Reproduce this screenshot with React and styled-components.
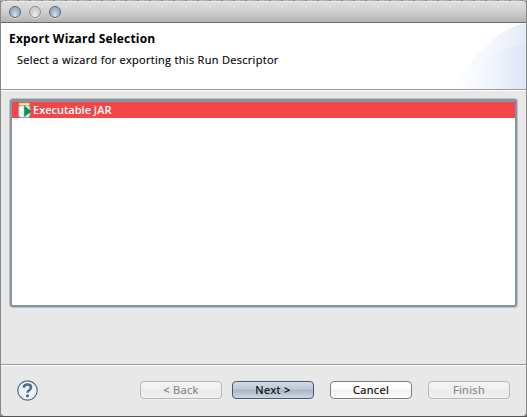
import React from 'react';
import styled, { createGlobalStyle } from 'styled-components';

const GlobalStyle = createGlobalStyle`
  * { box-sizing: border-box; }
  html, body { margin: 0; padding: 0; overflow: hidden; }
`;

const Desktop = styled.div`
  width: 527px;
  height: 417px;
  padding: 1px;
  background:
    linear-gradient(#555, #555) 0 100% / 100% 1px no-repeat,
    repeating-linear-gradient(90deg, #aaa 0 5px, #8b8886 5px 7px, #b5b5b5 7px 12px) 0 0 / 100% 1px no-repeat,
    linear-gradient(#8a8886, #8a8886);
  font-family: "Open Sans", "Noto Sans", sans-serif;
  color: #000;
`;

const Window = styled.main`
  display: flex;
  flex-direction: column;
  width: 525px;
  height: 415px;
  overflow: hidden;
  background: #e8e8e8;
  border-radius: 4px;
`;

const TitleBar = styled.div`
  display: flex;
  align-items: center;
  gap: 8px;
  height: 22px;
  flex: none;
  padding: 1px 0 0 8px;
  border-bottom: 1px solid #686868;
  background: linear-gradient(#f3f3f3 0, #dedede 1px, #d0d0d0 50%, #b3b3b3 100%);
`;

const WindowControl = styled.span`
  width: 12px;
  height: 12px;
  border-radius: 50%;
  border: 1px solid ${({ $muted }) => ($muted ? '#8d8d8d' : '#56657a')};
  background: ${({ $muted }) =>
    $muted
      ? 'radial-gradient(ellipse at 50% 90%, #f2f2f2, #cdcdcd 60%, #d6d6d6)'
      : 'radial-gradient(ellipse at 50% 90%, #dbe9f5, #9aabbe 65%, #b9c7d7)'};
  box-shadow: 0 1px 0 #dedede;
`;

const Header = styled.header`
  display: flex;
  justify-content: space-between;
  height: 68px;
  flex: none;
  background: #fff;
  border-bottom: 1px solid #fff;
  box-shadow: inset 0 -1px 0 #999;
`;

const Heading = styled.div`
  padding: 8px 0 0 8px;
`;

const Title = styled.h1`
  margin: 0;
  font-size: 12px;
  line-height: 16px;
  font-weight: 700;
  letter-spacing: 0.2px;
  white-space: nowrap;
`;

const Description = styled.p`
  margin: 5px 0 0 8px;
  font-size: 11px;
  line-height: 15px;
  letter-spacing: 0.3px;
  white-space: nowrap;
  -webkit-text-stroke: 0.15px currentColor;
`;

const Swoosh = styled.svg`
  width: 75px;
  height: 66px;
  flex: none;
`;

const Content = styled.section`
  flex: 1;
  padding: 8px 9px 0;
`;

const WizardList = styled.ul`
  height: 208px;
  margin: 0;
  padding: 0;
  list-style: none;
  background: #fff;
  border: 2px solid #87939f;
  border-top-width: 3px;
  border-radius: 3px;
  box-shadow: 0 0 0 1px #bac2c8;
`;

const WizardItem = styled.li`
  display: flex;
  align-items: center;
  height: 16px;
  padding-left: 5px;
  color: #fff;
  background: #f44549;
  font-size: 11px;
  line-height: 16px;
  font-weight: 600;
  white-space: nowrap;
`;

const Icon = styled.svg`
  width: 16px;
  height: 16px;
  flex: none;
`;

const Footer = styled.footer`
  display: flex;
  align-items: flex-start;
  height: 52px;
  flex: none;
  padding: 16px 16px 0 16px;
  border-top: 1px solid #999;
  box-shadow: inset 0 1px 0 #fff;
`;

const HelpButton = styled.button`
  width: 21px;
  height: 21px;
  margin: -1px auto 0 0;
  padding: 0;
  border: 0;
  background: none;
`;

const HelpIcon = styled.svg`
  display: block;
  width: 21px;
  height: 21px;
`;

const looks = {
  normal: ['#7e7e7e', 'linear-gradient(#fff 0, #fafafa 48%, #f0f0f0 52%, #fff)', '#000'],
  primary: ['#4d566c', 'linear-gradient(#d3dbe4 0, #bdc8d5 45%, #a9b6c4 52%, #cbdae7 100%)', '#000'],
  disabled: ['#b7b7b7', 'linear-gradient(#f3f3f3 0, #f0f0f0 48%, #ebebeb 52%, #f1f1f1)', '#848484'],
};

const Button = styled.button`
  width: 82px;
  height: 18px;
  margin: 0 0 0 ${({ $gap }) => $gap}px;
  padding: 0 0 1px;
  border: 1px solid ${({ $look }) => looks[$look][0]};
  border-radius: 4px;
  background: ${({ $look }) => looks[$look][1]};
  color: ${({ $look }) => looks[$look][2]};
  font: 11px/15px "Open Sans", "Noto Sans", sans-serif;
  letter-spacing: 0.35px;
  -webkit-text-stroke: 0.15px currentColor;
  box-shadow: 0 1px 0 rgba(255, 255, 255, 0.35);
`;

const JarIcon = () => (
  <Icon viewBox="0 0 16 16" aria-hidden="true">
    <path d="M3 3.500h8.500L13 5v9l-1.500 1.500H3L1.500 14V5z" fill="#d9eaf3" stroke="#8ba4b2" />
    <path d="M4.500 5v9.500" stroke="#fff" strokeWidth="2.500" />
    <rect x="2" y="1" width="10.500" height="2.500" rx=".5" fill="#fff0b5" stroke="#d9a95c" strokeWidth=".8" />
    <path d="M7.500 4v10.500L13.800 9.500z" fill="#07943c" stroke="#067d32" strokeWidth=".5" />
  </Icon>
);

export default function App() {
  return (
    <>
      <GlobalStyle />
      <Desktop>
        <Window>
          <TitleBar>
            <WindowControl />
            <WindowControl $muted />
            <WindowControl />
          </TitleBar>
          <Header>
            <Heading>
              <Title>Export Wizard Selection</Title>
              <Description>Select a wizard for exporting this Run Descriptor</Description>
            </Heading>
            <Swoosh viewBox="0 0 75 66" aria-hidden="true">
              <defs>
                <linearGradient id="outer">
                  <stop offset="0" stopColor="#fff" />
                  <stop offset=".5" stopColor="#f4f7fd" />
                  <stop offset="1" stopColor="#e5ebf9" />
                </linearGradient>
                <linearGradient id="inner">
                  <stop offset="0" stopColor="#fff" />
                  <stop offset=".5" stopColor="#eff4fc" />
                  <stop offset="1" stopColor="#dee5f7" />
                </linearGradient>
              </defs>
              <path d="M2 66C20 36 45 6 75 0v66z" fill="url(#outer)" />
              <path d="M9 66C25 43 48 25 75 21v45z" fill="url(#inner)" />
            </Swoosh>
          </Header>
          <Content>
            <WizardList>
              <WizardItem>
                <JarIcon />
                Executable JAR
              </WizardItem>
            </WizardList>
          </Content>
          <Footer>
            <HelpButton aria-label="Help">
              <HelpIcon viewBox="0 0 21 21">
                <circle cx="10.500" cy="10.500" r="9.700" fill="#eef1f5" stroke="#586b86" strokeWidth="1.200" />
                <path d="M6.800 7.700C7 3.500 14 3.700 14 7.500c0 2.800-3.500 2.600-3.500 5.300" fill="none" stroke="#526c8e" strokeWidth="2.500" />
                <circle cx="10.500" cy="15.800" r="1.600" fill="#526c8e" />
              </HelpIcon>
            </HelpButton>
            <Button $look="disabled" $gap={0} disabled>&lt; Back</Button>
            <Button $look="primary" $gap={10}>Next &gt;</Button>
            <Button $look="normal" $gap={16}>Cancel</Button>
            <Button $look="disabled" $gap={16} disabled>Finish</Button>
          </Footer>
        </Window>
      </Desktop>
    </>
  );
}
